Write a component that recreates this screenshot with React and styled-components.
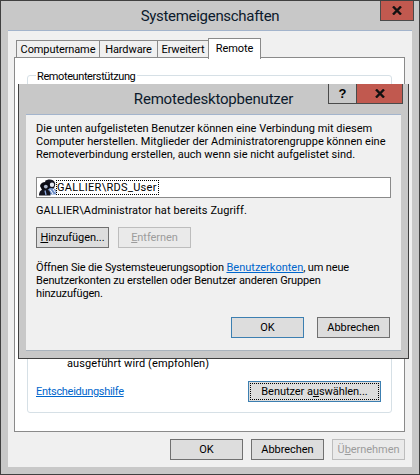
import React from 'react';
import styled, { createGlobalStyle } from 'styled-components';

const Global = createGlobalStyle`
  body {
    margin: 0;
    background: #c8c8c8;
    font-family: Roboto, 'Noto Sans', sans-serif;
    font-size: 11px;
    line-height: 13px;
    color: #000;
  }
`;

const Frame = styled.div`
  position: relative;
  box-sizing: border-box;
  width: 420px;
  height: 475px;
  display: flex;
  flex-direction: column;
  background: #c8c8c8;
  border: 1px solid #404040;
`;

const TitleBar = styled.div`
  display: grid;
  grid-template-columns: 1fr auto 1fr;
  height: ${props => props.height}px;
  flex: none;
`;

const Title = styled.div`
  grid-column: 2;
  font-size: 15px;
  letter-spacing: ${props => props.spacing}px;
  line-height: ${props => props.line}px;
  color: #0c1a2c;
  white-space: nowrap;
`;

const WindowButtons = styled.div`
  grid-column: 3;
  justify-self: end;
  display: flex;
  height: ${props => props.height}px;
  margin-right: ${props => props.right}px;
`;

const Close = styled.div`
  box-sizing: border-box;
  width: ${props => props.width}px;
  height: 100%;
  display: flex;
  align-items: center;
  justify-content: center;
  background: #c1594f;
  border: 1px solid #4a4a4a;
  border-top: none;
`;

const Help = styled.div`
  box-sizing: border-box;
  width: 28px;
  height: 100%;
  display: flex;
  align-items: center;
  justify-content: center;
  background: #c8c8c8;
  border: 1px solid #4a4a4a;
  border-top: none;
  border-right: none;
  font-family: 'Liberation Sans', sans-serif;
  font-weight: 700;
  font-size: 13px;
`;

const Client = styled.div`
  flex: 1;
  display: flex;
  flex-direction: column;
  min-height: 0;
  margin: 0 7px 7px;
  padding: 7px 7px 7px 6px;
  background: #f0f0f0;
  border-top: 1px solid #a3b4cc;
`;

const Tabs = styled.div`
  display: flex;
  align-items: flex-end;
  height: 20px;
  margin: 0 0 -1px 2px;
  position: relative;
  z-index: 1;
`;

const Tab = styled.div`
  box-sizing: border-box;
  width: ${props => props.width}px;
  height: ${props => (props.active ? 21 : 18)}px;
  margin-left: ${props => (props.first ? 0 : -1)}px;
  margin-bottom: ${props => (props.active ? -1 : 0)}px;
  padding-top: ${props => (props.active ? 3 : 2)}px;
  text-align: center;
  letter-spacing: -0.1px;
  background: ${props => (props.active ? '#fff' : '#f0f0f0')};
  border: 1px solid #8a8a8a;
  border-bottom: ${props => (props.active ? 'none' : '1px solid #8a8a8a')};
`;

const Panel = styled.div`
  flex: 1;
  display: flex;
  min-height: 0;
  box-sizing: border-box;
  padding: 9px 12px 18px;
  background: #fff;
  border: 1px solid #8a8a8a;
`;

const Group = styled.fieldset`
  flex: 1;
  display: flex;
  flex-direction: column;
  justify-content: flex-end;
  min-width: 0;
  margin: 0;
  padding: 0 10px 10px 8px;
  border: 1px solid #d6e0e6;
  border-radius: 3px;
`;

const Legend = styled.legend`
  padding: 3px 2px 0 1px;
  margin-left: 0;
  line-height: 13px;
  letter-spacing: -0.4px;
`;

const Note = styled.div`
  padding-left: 31px;
  margin-bottom: 11px;
  letter-spacing: 0.1px;
`;

const BottomRow = styled.div`
  display: flex;
  align-items: center;
  justify-content: space-between;
`;

const Link = styled.a`
  color: #0066cc;
  text-decoration: underline;
  letter-spacing: ${props => props.spacing || 0}px;
`;

const Button = styled.div`
  box-sizing: border-box;
  width: ${props => props.width || 73}px;
  height: 21px;
  display: flex;
  align-items: center;
  justify-content: center;
  flex: none;
  letter-spacing: -0.05px;
  background: ${props => (props.disabled ? '#eaeaea' : '#dddddd')};
  color: ${props => (props.disabled ? '#9c9c9c' : '#000')};
  border: 1px solid ${props => (props.blue ? '#3c7fb1' : props.disabled ? '#bdbdbd' : '#707070')};
  ${props => props.focus && 'outline: 1px dotted #000; outline-offset: -3px;'}
`;

const Footer = styled.div`
  display: flex;
  justify-content: flex-end;
  gap: 8px;
  margin-top: 7px;
`;

const Dialog = styled.div`
  position: absolute;
  left: 17px;
  top: 83px;
  box-sizing: border-box;
  width: 391px;
  height: 275px;
  display: flex;
  flex-direction: column;
  background: #c8c8c8;
  border: 1px solid #404040;
  border-top: none;
`;

const DialogClient = styled.div`
  flex: 1;
  display: flex;
  flex-direction: column;
  margin: 0 7px 7px;
  padding: 7px 10px 12px 10px;
  background: #f0f0f0;
  border-top: 1px solid #a3b4cc;
  border-bottom: 1px solid #a9b3bd;
`;

const Paragraph = styled.div`
  margin-top: ${props => props.top || 0}px;
  letter-spacing: ${props => props.spacing || 0}px;
  white-space: nowrap;
`;

const UserList = styled.div`
  box-sizing: border-box;
  height: 21px;
  margin-top: 16px;
  display: flex;
  align-items: center;
  padding-left: 2px;
  background: #fff;
  border: 1px solid #8a8a8a;
`;

const UserName = styled.span`
  outline: 1px dotted #000;
  outline-offset: 0;
  padding-right: 1px;
  letter-spacing: 0.3px;
`;

const ButtonRow = styled.div`
  display: flex;
  gap: 9px;
  margin-top: 10px;
`;

const DialogActions = styled.div`
  display: flex;
  justify-content: flex-end;
  gap: 13px;
  margin-top: auto;
  padding-right: 1px;
`;

function CloseGlyph() {
  return (
    <svg width="10" height="9" viewBox="0 0 10 9">
      <path d="M1 0.5 L9 8.5 M9 0.5 L1 8.5" stroke="#111" strokeWidth="2.4" />
    </svg>
  );
}

function UsersIcon() {
  return (
    <svg width="18" height="17" viewBox="0 0 18 17">
      <path d="M6 2 C9 -0.5 15 0 16 4 C16.5 6.5 15.5 9 14 10 L9 10 Z" fill="#14141f" />
      <circle cx="13" cy="5.8" r="2.2" fill="#e4e9f4" />
      <path d="M9 10 C11 8.5 15 8.5 17.5 11.5 L17 15.5 L10 15.5 Z" fill="#6f8fc8" />
      <path d="M11 10.5 L14 15 M14 10 L16.5 13.5" stroke="#fff" strokeWidth="1" />
      <path d="M1 7 C1.5 2.5 9 1.5 10.5 5.5 C11 8 10 10.5 8.5 11 L3 11 Z" fill="#0c0c14" />
      <circle cx="6.8" cy="7.6" r="1.9" fill="#aeb8cc" />
      <path d="M0 16.5 C0 12.5 2 10.5 5 10.5 L8 10.5 C10.5 11 11.5 13.5 11.5 16.5 Z" fill="#14141f" />
      <path d="M6 11.5 L7 16" stroke="#8aa6dc" strokeWidth="1.3" />
    </svg>
  );
}

export default function App() {
  return (
    <>
      <Global />
      <Frame>
        <TitleBar height={29}>
          <Title line={30} spacing={-0.3}>Systemeigenschaften</Title>
          <WindowButtons height={20} right={5}>
            <Close width={34}><CloseGlyph /></Close>
          </WindowButtons>
        </TitleBar>
        <Client>
          <Tabs>
            <Tab first width={84}>Computername</Tab>
            <Tab width={59}>Hardware</Tab>
            <Tab width={52}>Erweitert</Tab>
            <Tab active width={53}>Remote</Tab>
          </Tabs>
          <Panel>
            <Group>
              <Legend>Remoteunterstützung</Legend>
              <Note>ausgeführt wird (empfohlen)</Note>
              <BottomRow>
                <Link spacing={-0.3}>Entscheidungshilfe</Link>
                <Button blue focus width={133}>Benutzer a<u>u</u>swählen...</Button>
              </BottomRow>
            </Group>
          </Panel>
          <Footer>
            <Button>OK</Button>
            <Button>Abbrechen</Button>
            <Button disabled>Ü<u>b</u>ernehmen</Button>
          </Footer>
        </Client>
        <Dialog>
          <TitleBar height={30}>
            <Title line={30} spacing={-0.2}>Remotedesktopbenutzer</Title>
            <WindowButtons height={20} right={5}>
              <Help>?</Help>
              <Close width={47}><CloseGlyph /></Close>
            </WindowButtons>
          </TitleBar>
          <DialogClient>
            <Paragraph>
              Die unten aufgelisteten Benutzer können eine Verbindung mit diesem<br />
              Computer herstellen. Mitglieder der Administratorengruppe können eine<br />
              Remoteverbindung erstellen, auch wenn sie nicht aufgelistet sind.
            </Paragraph>
            <UserList>
              <UsersIcon />
              <UserName>GALLIER\RDS_User</UserName>
            </UserList>
            <Paragraph top={6} spacing={0.1}>GALLIER\Administrator hat bereits Zugriff.</Paragraph>
            <ButtonRow>
              <Button><u>H</u>inzufügen...</Button>
              <Button disabled><u>E</u>ntfernen</Button>
            </ButtonRow>
            <Paragraph top={13} spacing={-0.15}>
              Öffnen Sie die Systemsteuerungsoption <Link>Benutzerkonten</Link>, um neue<br />
              Benutzerkonten zu erstellen oder Benutzer anderen Gruppen<br />
              hinzuzufügen.
            </Paragraph>
            <DialogActions>
              <Button blue>OK</Button>
              <Button>Abbrechen</Button>
            </DialogActions>
          </DialogClient>
        </Dialog>
      </Frame>
    </>
  );
}
